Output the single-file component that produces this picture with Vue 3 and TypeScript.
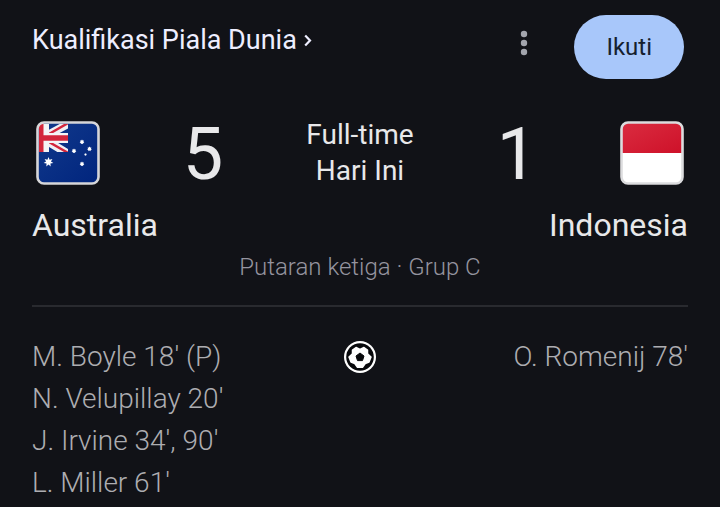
<script setup lang="ts">
interface Team {
  name: string
  score: number
  goals: string[]
}

const home: Team = {
  name: 'Australia',
  score: 5,
  goals: ["M. Boyle 18' (P)", "N. Velupillay 20'", "J. Irvine 34', 90'", "L. Miller 61'"],
}
const away: Team = {
  name: 'Indonesia',
  score: 1,
  goals: ["O. Romenij 78'"],
}

// Centres and radii of the small stars of the Southern Cross
const stars = [
  { x: 46, y: 21, r: 2.4 },
  { x: 38, y: 30, r: 2.4 },
  { x: 53.5, y: 28, r: 2.4 },
  { x: 49.5, y: 33.5, r: 1.4 },
  { x: 46, y: 43, r: 2.4 },
]

function starPoints(cx: number, cy: number, outer: number, inner: number, tips = 7): string {
  return Array.from({ length: tips * 2 }, (_, i) => {
    const r = i % 2 ? inner : outer
    const a = (Math.PI * i) / tips - Math.PI / 2
    return `${(cx + r * Math.cos(a)).toFixed(2)},${(cy + r * Math.sin(a)).toFixed(2)}`
  }).join(' ')
}
</script>

<template>
  <main class="match">
    <header class="top">
      <a class="league" href="#">Kualifikasi Piala Dunia
        <svg class="chevron" viewBox="0 0 8 14" aria-hidden="true">
          <path d="M1.2 2.500 6 7.500l-4.800 5" fill="none" stroke="currentColor" stroke-width="2.200" />
        </svg>
      </a>
      <button class="more" type="button" aria-label="Opsi lainnya">
        <svg viewBox="0 0 8 28" aria-hidden="true">
          <circle cx="4" cy="5" r="3.200" /><circle cx="4" cy="14" r="3.200" /><circle cx="4" cy="23" r="3.200" />
        </svg>
      </button>
      <button class="follow" type="button">Ikuti</button>
    </header>

    <section class="scoreboard">
      <svg class="flag" viewBox="0 0 64 64" role="img" aria-label="Australia">
        <defs>
          <linearGradient id="navy" x1="0" y1="0" x2="1" y2="1">
            <stop offset="0" stop-color="#123a8c" /><stop offset="1" stop-color="#00247d" />
          </linearGradient>
          <clipPath id="canton"><path d="M3 3h29v28H3z" /></clipPath>
          <clipPath id="field"><rect x="2" y="2" width="60" height="60" rx="5" /></clipPath>
        </defs>
        <g clip-path="url(#field)">
          <rect width="64" height="64" fill="url(#navy)" />
          <g clip-path="url(#canton)" fill="none">
            <path d="M6 17 34 2M6 17 34 34" stroke="#f0f0f4" stroke-width="8" />
            <path d="M6 17 34 1M6 17 34 33" stroke="#d3263c" stroke-width="2.500" />
            <path d="M8 0v34M0 17h34" stroke="#f4f4f6" stroke-width="10" />
            <path d="M4.500 0v34" stroke="#d3263c" stroke-width="6" />
            <path d="M0 17h34" stroke="#d3263c" stroke-width="5.500" />
          </g>
          <polygon :points="starPoints(12.5, 41, 5, 2.5)" fill="#fff" />
          <polygon
            v-for="s in stars"
            :key="s.x + '-' + s.y"
            :points="starPoints(s.x, s.y, s.r, s.r * 0.65)"
            fill="#fff"
          />
        </g>
        <rect x="1.500" y="1.500" width="61" height="61" rx="6.500" fill="none" stroke="#d6d6d9" stroke-width="2.600" />
      </svg>
      <span class="score">{{ home.score }}</span>
      <p class="status">Full-time<br />Hari Ini</p>
      <span class="score">{{ away.score }}</span>
      <svg class="flag" viewBox="0 0 64 64" role="img" aria-label="Indonesia">
        <defs>
          <linearGradient id="red" x1="0" y1="0" x2="1" y2="1">
            <stop offset="0" stop-color="#da2c40" /><stop offset="1" stop-color="#ce1129" />
          </linearGradient>
        </defs>
        <rect x="1" y="1" width="62" height="62" rx="7" fill="#fff" />
        <path d="M2 32V7q0-5 5-5h50q5 0 5 5v25z" fill="url(#red)" />
        <rect x="1.500" y="1.500" width="61" height="61" rx="6.500" fill="none" stroke="#dcdcde" stroke-width="2.600" />
      </svg>
    </section>

    <div class="names">
      <span>{{ home.name }}</span>
      <span>{{ away.name }}</span>
    </div>
    <p class="stage">Putaran ketiga · Grup C</p>

    <section class="goals">
      <ul>
        <li v-for="goal in home.goals" :key="goal">{{ goal }}</li>
      </ul>
      <svg class="ball" viewBox="0 0 32 32" role="img" aria-label="Gol">
        <circle cx="16" cy="16" r="16" fill="#fff" />
        <circle cx="16" cy="16" r="13.800" fill="#08090c" />
        <path
          d="M16 8.500 20 6.500 23.500 9 23.500 12.800 27 16 25 21 21.200 22.500 18.500 26.300H13.500L10.800 22.500 7 21 5 16 8.500 12.800 8.500 9 12 6.500Z"
          fill="#fff" stroke="#fff" stroke-width="1.500" stroke-linejoin="round"
        />
        <path d="m16 12 4 3-1.500 4.600h-5L12 15Z" fill="#08090c" stroke="#08090c" stroke-linejoin="round" />
      </svg>
      <ul class="away">
        <li v-for="goal in away.goals" :key="goal">{{ goal }}</li>
      </ul>
    </section>
  </main>
</template>

<style>
body {
  margin: 0;
  background: #111217;
}
</style>

<style scoped>
.match {
  padding: 15px 32px 4px;
  font-family: Roboto, "Liberation Sans", sans-serif;
  color: #e8e8ea;
}
p,
ul {
  margin: 0;
  padding: 0;
  list-style: none;
}
button {
  border: 0;
  padding: 0;
  background: none;
  font: inherit;
  cursor: pointer;
}
.top {
  display: flex;
  align-items: flex-start;
  padding-right: 4px;
}
.league {
  display: flex;
  align-items: center;
  gap: 7px;
  margin-right: auto;
  font-size: 27px;
  line-height: 50px;
  color: #eeeeff;
  text-decoration: none;
}
.chevron {
  width: 8px;
  height: 14px;
}
.more {
  display: flex;
  justify-content: center;
  width: 24px;
  padding: 14px 0;
  margin-right: 38px;
}
.more svg {
  width: 8px;
  height: 28px;
  fill: #a3a5ad;
}
.follow {
  padding: 0 32px;
  border-radius: 32px;
  background: #a8c7fa;
  color: #15202e;
  font-size: 24px;
  line-height: 64px;
}
.scoreboard {
  display: grid;
  grid-template-columns: 64px 1fr 108px 1fr 64px;
  align-items: center;
  padding: 0 4px;
  margin-top: 36px;
  text-align: center;
}
.flag {
  width: 64px;
  height: 64px;
}
.score {
  padding-top: 4px;
  font-size: 72px;
  line-height: 72px;
}
.status {
  font-size: 28px;
  line-height: 36px;
  white-space: nowrap;
}
.names {
  display: flex;
  justify-content: space-between;
  margin-top: 14px;
  font-size: 32px;
  line-height: 40px;
}
.stage {
  padding: 8px 0 24px;
  border-bottom: 2px solid #292a2f;
  font-size: 24px;
  font-weight: 300;
  line-height: 28px;
  text-align: center;
  color: #95949f;
}
.goals {
  display: grid;
  grid-template-columns: 1fr 32px 1fr;
  padding-top: 29px;
  font-size: 28px;
  font-weight: 300;
  line-height: 42px;
  color: #adadb1;
}
.away {
  text-align: right;
}
.ball {
  width: 32px;
  height: 32px;
  margin-top: 5px;
}
</style>
